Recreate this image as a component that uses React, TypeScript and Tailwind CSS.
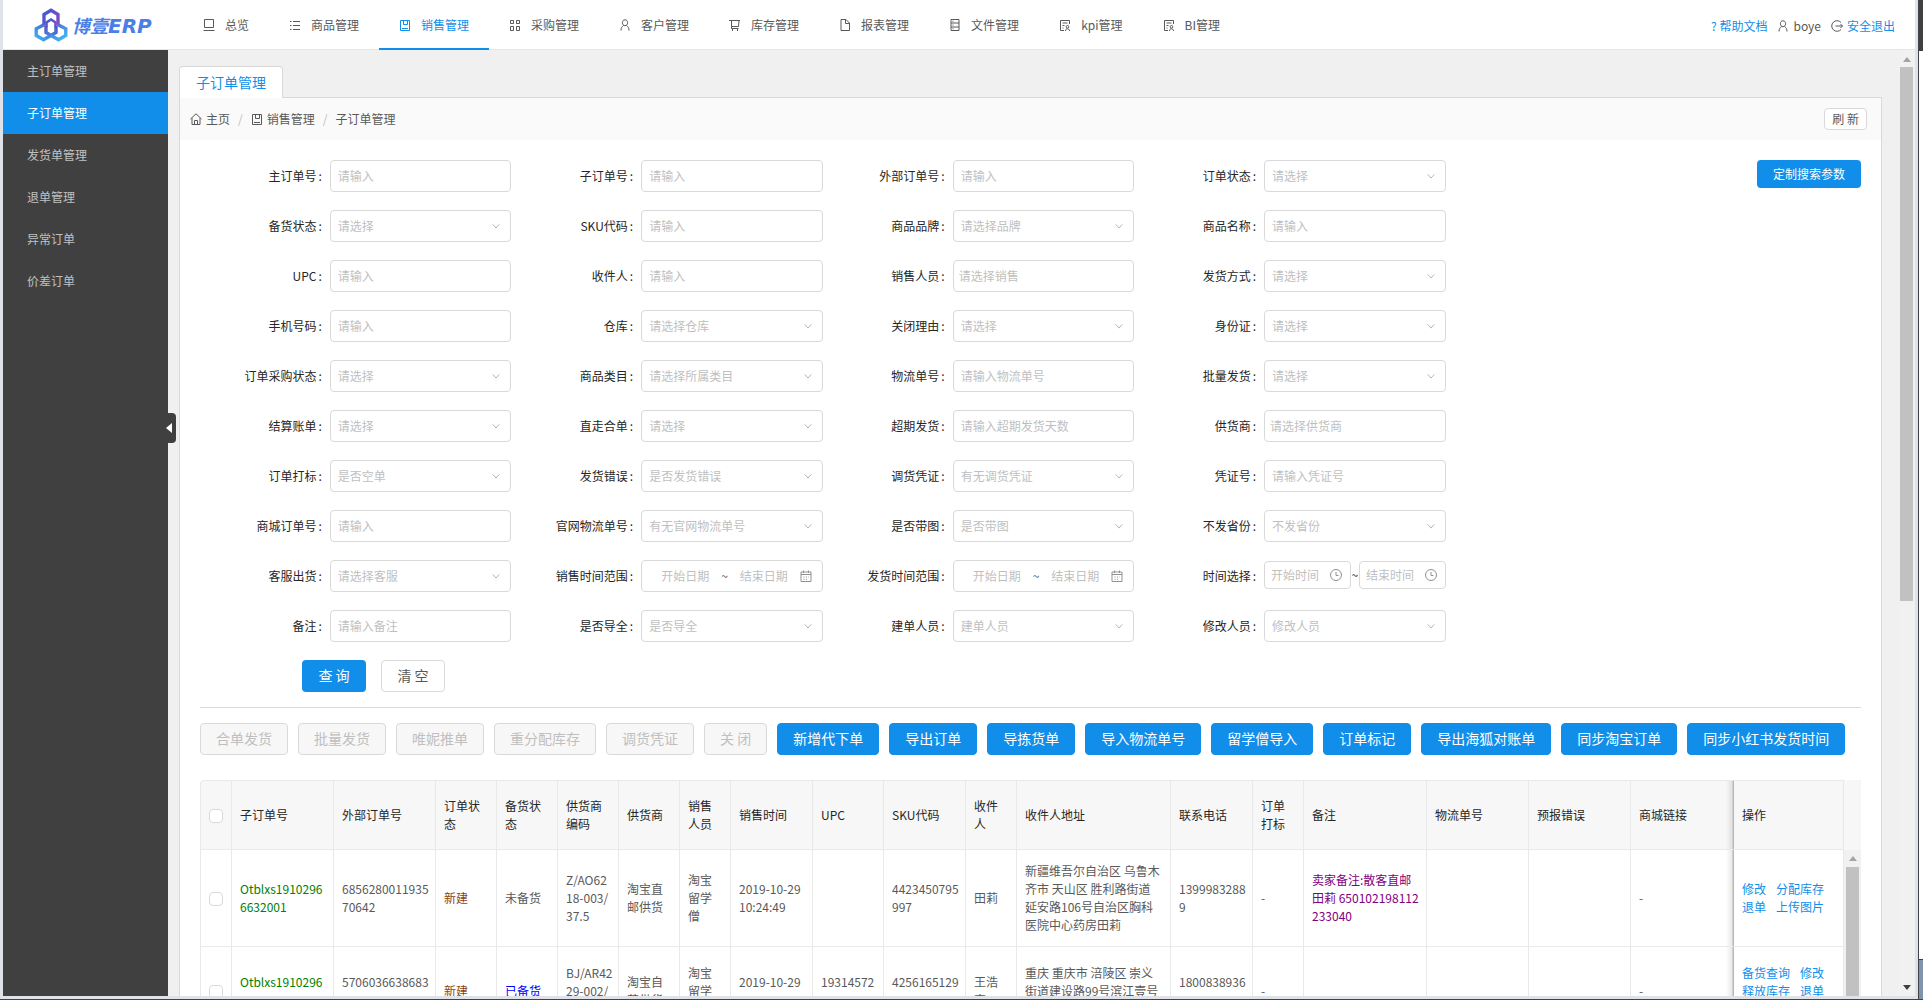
import { useId } from 'react'
import type { ReactNode } from 'react'
import { clsx } from 'clsx'

type IconName =
  | 'laptop'
  | 'list'
  | 'book'
  | 'apps'
  | 'user'
  | 'cart'
  | 'file'
  | 'database'
  | 'solution'
  | 'home'
  | 'logout'
  | 'calendar'
  | 'clock'
  | 'down'

const iconPaths: Record<IconName, ReactNode> = {
  laptop: <path d="M1.5 .5h9v8h-9zM.5 11.5h11" />,
  list: <path d="M1 2.5h1.500M4 2.500h7M1 6.500h1.500M4 6.500h7M1 10.500h1.500M4 10.500h7" />,
  book: <path d="M1.500 1.500h9v10h-9zM4.500 1.500v4h4v-4M3 9.500h6" />,
  apps: <path d="M1.500 1.500h3v3h-3zM7.500 1.500h3v3h-3zM1.500 7.500h3v4h-3zM7.500 7.500h3v4h-3z" />,
  user: (
    <path d="M6 .8c1.700 0 2.600 1.200 2.600 2.900S7.600 6.700 6 6.700 3.400 5.400 3.400 3.700 4.300.8 6 .8zM4.500 6.500C3 7.500 2 9 2 11.500M7.500 6.500C9 7.500 10 9 10 11.500" />
  ),
  cart: <path d="M0 1.500h11M2.500 1.500v6h7l.500-6M2.500 7.500v2h7M3.500 10v2M8.500 10v2" />,
  file: <path d="M2 .5h5l3.500 3.500v7.500H2zM6.500.5v4h4" />,
  database: <path d="M2 .5h8v11H2zM2 4h8M2 8h8M3.500 2.300h1M3.500 6h1M3.500 9.800h1" />,
  solution: (
    <path d="M5 11.500H1.500v-10h9V5M3.500 4h5M3.500 6.500h2M3.500 9h1M8.500 6.500a1.300 1.300 0 1 1 0 2.600 1.300 1.300 0 0 1 0-2.600M6.500 12c0-3 4-3 4 0" />
  ),
  home: <path d="M.5 6 6 .8 11.500 6M2 5v6.500h8V5M4.500 11.500v-4h3v4" />,
  logout: <path d="M10 2.500A5.300 5.300 0 1 0 10 9.500M4.500 6h7M9.500 4l2 2-2 2" />,
  calendar: <path d="M1 2h10v9.500H1zM1 4.500h10M3.500.5V3M8.500.5V3M3.500 7h1M6 7h1M8.500 7h.5M3.500 9.300h1M6 9.300h1" />,
  clock: <path d="M6 .5a5.500 5.500 0 1 1 0 11 5.500 5.500 0 0 1 0-11M6 3v3.500h2.500" />,
  down: <path d="M2 4l4 4.500L10 4" />,
}

function Icon({ name, className }: { name: IconName; className?: string }) {
  return (
    <svg
      viewBox="0 0 12 12"
      fill="none"
      stroke="currentColor"
      className={clsx('shrink-0 overflow-visible', className ?? 'h-3 w-3')}
      aria-hidden="true"
    >
      {iconPaths[name]}
    </svg>
  )
}

const navItems: { label: string; icon: IconName; active?: boolean }[] = [
  { label: '总览', icon: 'laptop' },
  { label: '商品管理', icon: 'list' },
  { label: '销售管理', icon: 'book', active: true },
  { label: '采购管理', icon: 'apps' },
  { label: '客户管理', icon: 'user' },
  { label: '库存管理', icon: 'cart' },
  { label: '报表管理', icon: 'file' },
  { label: '文件管理', icon: 'database' },
  { label: 'kpi管理', icon: 'solution' },
  { label: 'BI管理', icon: 'solution' },
]

const sideItems = ['主订单管理', '子订单管理', '发货单管理', '退单管理', '异常订单', '价差订单']

type FieldKind = 'input' | 'combo' | 'select' | 'dates' | 'times'

const fields: [label: string, placeholder: string, kind: FieldKind][] = [
  ['主订单号', '请输入', 'input'],
  ['子订单号', '请输入', 'input'],
  ['外部订单号', '请输入', 'input'],
  ['订单状态', '请选择', 'select'],
  ['备货状态', '请选择', 'select'],
  ['SKU代码', '请输入', 'input'],
  ['商品品牌', '请选择品牌', 'select'],
  ['商品名称', '请输入', 'input'],
  ['UPC', '请输入', 'input'],
  ['收件人', '请输入', 'input'],
  ['销售人员', '请选择销售', 'combo'],
  ['发货方式', '请选择', 'select'],
  ['手机号码', '请输入', 'input'],
  ['仓库', '请选择仓库', 'select'],
  ['关闭理由', '请选择', 'select'],
  ['身份证', '请选择', 'select'],
  ['订单采购状态', '请选择', 'select'],
  ['商品类目', '请选择所属类目', 'select'],
  ['物流单号', '请输入物流单号', 'input'],
  ['批量发货', '请选择', 'select'],
  ['结算账单', '请选择', 'select'],
  ['直走合单', '请选择', 'select'],
  ['超期发货', '请输入超期发货天数', 'input'],
  ['供货商', '请选择供货商', 'combo'],
  ['订单打标', '是否空单', 'select'],
  ['发货错误', '是否发货错误', 'select'],
  ['调货凭证', '有无调货凭证', 'select'],
  ['凭证号', '请输入凭证号', 'input'],
  ['商城订单号', '请输入', 'input'],
  ['官网物流单号', '有无官网物流单号', 'select'],
  ['是否带图', '是否带图', 'select'],
  ['不发省份', '不发省份', 'select'],
  ['客服出货', '请选择客服', 'select'],
  ['销售时间范围', '', 'dates'],
  ['发货时间范围', '', 'dates'],
  ['时间选择', '', 'times'],
  ['备注', '请输入备注', 'input'],
  ['是否导全', '是否导全', 'select'],
  ['建单人员', '建单人员', 'select'],
  ['修改人员', '修改人员', 'select'],
]

const actions: { label: string; disabled?: boolean }[] = [
  { label: '合单发货', disabled: true },
  { label: '批量发货', disabled: true },
  { label: '唯妮推单', disabled: true },
  { label: '重分配库存', disabled: true },
  { label: '调货凭证', disabled: true },
  { label: '关 闭', disabled: true },
  { label: '新增代下单' },
  { label: '导出订单' },
  { label: '导拣货单' },
  { label: '导入物流单号' },
  { label: '留学僧导入' },
  { label: '订单标记' },
  { label: '导出海狐对账单' },
  { label: '同步淘宝订单' },
  { label: '同步小红书发货时间' },
]

const columns: { title: string; width: string }[] = [
  { title: '子订单号', width: 'w-[102px]' },
  { title: '外部订单号', width: 'w-[102px]' },
  { title: '订单状\n态', width: 'w-[61px]' },
  { title: '备货状\n态', width: 'w-[61px]' },
  { title: '供货商\n编码', width: 'w-[61px]' },
  { title: '供货商', width: 'w-[61px]' },
  { title: '销售\n人员', width: 'w-[51px]' },
  { title: '销售时间', width: 'w-[82px]' },
  { title: 'UPC', width: 'w-[71px]' },
  { title: 'SKU代码', width: 'w-[82px]' },
  { title: '收件\n人', width: 'w-[51px]' },
  { title: '收件人地址', width: 'w-[154px]' },
  { title: '联系电话', width: 'w-[82px]' },
  { title: '订单\n打标', width: 'w-[51px]' },
  { title: '备注', width: 'w-[123px]' },
  { title: '物流单号', width: 'w-[102px]' },
  { title: '预报错误', width: 'w-[102px]' },
  { title: '商城链接', width: 'w-[102px]' },
]

const rows: { height: string; cells: string[]; links: string[][] }[] = [
  {
    height: 'h-[97px]',
    cells: [
      'Otblxs1910296\n6632001',
      '6856280011935\n70642',
      '新建',
      '未备货',
      'Z/AO62\n18-003/\n37.5',
      '淘宝直\n邮供货',
      '淘宝\n留学\n僧',
      '2019-10-29\n10:24:49',
      '',
      '4423450795\n997',
      '田莉',
      '新疆维吾尔自治区 乌鲁木\n齐市 天山区 胜利路街道\n延安路106号自治区胸科\n医院中心药房田莉',
      '1399983288\n9',
      '-',
      '卖家备注:散客直邮\n田莉 650102198112\n233040',
      '',
      '',
      '-',
    ],
    links: [
      ['修改', '分配库存'],
      ['退单', '上传图片'],
    ],
  },
  {
    height: 'h-[89px]',
    cells: [
      'Otblxs1910296\n6632002',
      '5706036638683\n70642',
      '新建',
      '已备货',
      'BJ/AR42\n29-002/\n38',
      '淘宝自\n营供货',
      '淘宝\n留学\n僧',
      '2019-10-29\n10:21:30',
      '19314572\n3801',
      '4256165129\n998',
      '王浩\n宇',
      '重庆 重庆市 涪陵区 崇义\n街道建设路99号滨江壹号\n小区',
      '1800838936\n8',
      '-',
      '',
      '',
      '',
      '-',
    ],
    links: [['备货查询', '修改'], ['释放库存', '退单'], ['上传图片']],
  },
]

const boxClass =
  'w-full rounded border border-[#d9d9d9] bg-white outline-none placeholder:text-[#bfbfbf] placeholder:opacity-100'

function cellColor(index: number, value: string) {
  if (index === 0) return 'text-[#008000]'
  if (index === 2) return 'text-[#8b4513]'
  if (index === 14) return 'text-[#800080]'
  if (value === '已备货') return 'text-[#0000ff]'
  return 'text-[#595959]'
}

export default function App() {
  return (
    <div className="flex h-screen flex-col overflow-hidden bg-[#dfe3e9] font-['Noto_Sans_CJK_SC',sans-serif] text-xs leading-[18px] text-[#595959]">
      <div className="flex min-h-0 flex-1">
        <div className="flex min-w-0 flex-1 flex-col pb-[3px] pl-[3px]">
          <Header />
          <div className="flex min-h-0 flex-1 bg-[#f0f0f0]">
            <Sidebar />
            <main className="flex min-w-0 flex-1 flex-col overflow-hidden pt-4 pr-4 pl-[11px]">
              <OrderPage />
            </main>
            <PageScrollbar />
          </div>
        </div>
        <WindowEdge />
      </div>
      <div className="h-px shrink-0 bg-[#404347]" />
    </div>
  )
}

function Logo() {
  return (
    <a href="#home" className="flex h-full w-[181px] shrink-0 items-center pl-[31px]">
      <svg viewBox="0 0 34 34" className="h-[34px] w-[34px] shrink-0" fill="none" strokeWidth="3.400" aria-hidden="true">
        <defs>
          <linearGradient id="top" x1="0" y1="0" x2="1" y2="1">
            <stop offset="0" stopColor="#3f5bd8" />
            <stop offset="1" stopColor="#8a48bd" />
          </linearGradient>
          <linearGradient id="left" x1="0" y1="1" x2="1" y2="0">
            <stop offset="0" stopColor="#3cb4f5" />
            <stop offset="1" stopColor="#4a52c8" />
          </linearGradient>
          <linearGradient id="right" x1="0" y1="0" x2="1" y2="1">
            <stop offset="0" stopColor="#5a50c4" />
            <stop offset="1" stopColor="#3fc0f6" />
          </linearGradient>
        </defs>
        <path d="M10 17V6.500L17 2.300l7 4.200V17" stroke="url(#top)" />
        <path d="M12.500 19v-4.500L17 11.500l4.500 3V19" stroke="url(#top)" strokeWidth="2.600" />
        <path d="M10.500 16.500 2.200 20.800v6.700l7.300 4.300L22 24.500V18" stroke="url(#left)" />
        <path d="m23.500 16.500 8.300 4.300v6.700l-7.300 4.300L12 24.500V18" stroke="url(#right)" />
      </svg>
      <span className="ml-1 flex items-baseline pt-0.5 font-bold text-[#4a80e6] italic">
        <span className="text-lg leading-6">博壹</span>
        <span className="font-['DejaVu_Sans',sans-serif] text-xl leading-6">ERP</span>
      </span>
    </a>
  )
}

function Header() {
  return (
    <header className="flex h-[50px] shrink-0 border-b border-[#e6e6e6] bg-white">
      <Logo />
      <nav className="-ml-px flex">
        {navItems.map(({ label, icon, active }) => (
          <a
            key={label}
            href={`#${label}`}
            className={clsx(
              'flex h-[50px] items-center gap-2.5 border-y-2 border-t-transparent px-5 whitespace-nowrap',
              active ? 'border-b-[#108ee9] text-[#108ee9]' : 'border-b-transparent',
            )}
          >
            <Icon name={icon} />
            {label}
          </a>
        ))}
      </nav>
      <div className="ml-auto flex items-center gap-2.5 pt-0.5 pr-5 whitespace-nowrap">
        <a href="#help" className="text-[#108ee9]">
          ? 帮助文档
        </a>
        <span className="flex items-center gap-1">
          <Icon name="user" />
          boye
        </span>
        <a href="#logout" className="flex items-center gap-1 text-[#108ee9]">
          <Icon name="logout" className="h-3 w-3 text-[#595959]" />
          安全退出
        </a>
      </div>
    </header>
  )
}

function Sidebar() {
  return (
    <aside className="relative w-[165px] shrink-0 bg-[#404040]">
      <nav className="flex flex-col">
        {sideItems.map(item => (
          <a
            key={item}
            href={`#${item}`}
            className={clsx(
              'flex h-[42px] items-center pl-6',
              item === '子订单管理' ? 'bg-[#108ee9] text-white' : 'text-[#c0c0c0]',
            )}
          >
            {item}
          </a>
        ))}
      </nav>
      <button
        type="button"
        aria-label="收起菜单"
        className="absolute top-[363px] -right-2 flex h-[30px] w-2.5 items-center rounded-r-sm bg-[#404040]"
      >
        <svg viewBox="0 0 6 10" className="h-2.5 w-1.5" fill="#fff" aria-hidden="true">
          <path d="M6 0v10L0 5z" />
        </svg>
      </button>
    </aside>
  )
}

function OrderPage() {
  return (
    <>
      <div className="flex shrink-0">
        <button
          type="button"
          className="h-8 rounded-t border border-b-0 border-[#d9d9d9] bg-white px-4 pb-0.5 text-sm whitespace-nowrap text-[#108ee9]"
        >
          子订单管理
        </button>
        <div className="flex-1 border-b border-[#d9d9d9]" />
      </div>

      <div className="min-h-0 flex-1 overflow-hidden border-x border-[#d9d9d9] bg-white">
        <div className="flex h-[42px] items-center justify-between bg-[#fafafa] pr-3.5 pl-2.5">
          <nav className="flex items-center gap-2">
            <a href="#home" className="flex items-center gap-1">
              <Icon name="home" />
              主页
            </a>
            <span className="text-[#bfbfbf]">/</span>
            <a href="#sales" className="flex items-center gap-1">
              <Icon name="book" />
              销售管理
            </a>
            <span className="text-[#bfbfbf]">/</span>
            <span>子订单管理</span>
          </nav>
          <button type="button" className="h-[22px] rounded border border-[#d9d9d9] bg-white px-[7px] leading-5">
            刷 新
          </button>
        </div>

        <div className="px-5 pt-5">
          <SearchForm />
          <div className="mt-[15px] flex gap-2.5 overflow-hidden border-t border-[#d9d9d9] pt-[15px]">
            {actions.map(({ label, disabled }) => (
              <button
                key={label}
                type="button"
                disabled={disabled}
                className={clsx(
                  'h-8 shrink-0 rounded border px-[15px] pb-0.5 text-sm whitespace-nowrap',
                  disabled
                    ? 'border-[#d9d9d9] bg-[#f7f7f7] text-[#bfbfbf]'
                    : 'border-[#108ee9] bg-[#108ee9] text-white',
                )}
              >
                {label}
              </button>
            ))}
          </div>
          <OrderTable />
        </div>
      </div>
    </>
  )
}

function SearchForm() {
  return (
    <form onSubmit={e => e.preventDefault()}>
      <div className="flex">
        <div className="grid w-3/4 grid-cols-4 gap-y-[18px]">
          {fields.map(([label, placeholder, kind]) => (
            <Field key={label} label={label} placeholder={placeholder} kind={kind} />
          ))}
        </div>
        <div className="flex w-1/4 items-start justify-end">
          <button type="button" className="h-7 rounded bg-[#108ee9] px-4 text-white">
            定制搜索参数
          </button>
        </div>
      </div>
      <div className="mt-[18px] flex gap-[15px] pl-[102px]">
        <button type="submit" className="h-8 w-16 rounded bg-[#108ee9] pb-0.5 text-sm text-white">
          查 询
        </button>
        <button type="reset" className="h-8 w-16 rounded border border-[#d9d9d9] bg-white pb-0.5 text-sm">
          清 空
        </button>
      </div>
    </form>
  )
}

function Field({ label, placeholder, kind }: { label: string; placeholder: string; kind: FieldKind }) {
  const id = useId()

  return (
    <div className="flex h-8 items-center">
      <label htmlFor={id} className="w-5/12 pr-2 text-right whitespace-nowrap text-[#262626]">
        {label}
        <span className="ml-0.5">:</span>
      </label>
      <div className="w-7/12">
        {kind === 'input' && (
          <input id={id} placeholder={placeholder} className={clsx(boxClass, 'block h-8 px-[7px] pb-px')} />
        )}
        {kind === 'combo' && (
          <input
            id={id}
            role="combobox"
            aria-expanded="false"
            placeholder={placeholder}
            className={clsx(boxClass, 'block h-8 px-[5px] pb-px')}
          />
        )}
        {kind === 'select' && (
          <div className="relative">
            <select id={id} className={clsx(boxClass, 'block h-8 appearance-none px-[7px] text-[#bfbfbf]')}>
              <option>{placeholder}</option>
            </select>
            <Icon
              name="down"
              className="pointer-events-none absolute top-[11px] right-2.5 h-2.5 w-2.5 text-[#a8a8a8]"
            />
          </div>
        )}
        {kind === 'dates' && (
          <div className={clsx(boxClass, 'flex h-8 items-center pr-2.5 pl-[7px]')}>
            <input
              id={id}
              placeholder="开始日期"
              className="w-0 flex-1 text-center outline-none placeholder:text-[#bfbfbf]"
            />
            <span>~</span>
            <input
              aria-label={`${label}结束日期`}
              placeholder="结束日期"
              className="w-0 flex-1 text-center outline-none placeholder:text-[#bfbfbf]"
            />
            <Icon name="calendar" className="h-3 w-3 text-[#919191]" />
          </div>
        )}
        {kind === 'times' && (
          <div className="flex items-center justify-between pb-0.5 text-[#262626]">
            <TimeBox id={id} placeholder="开始时间" />
            <span className="w-2 text-center">~</span>
            <TimeBox placeholder="结束时间" />
          </div>
        )}
      </div>
    </div>
  )
}

function TimeBox({ id, placeholder }: { id?: string; placeholder: string }) {
  return (
    <div className="flex h-7 min-w-0 flex-1 items-center rounded border border-[#d9d9d9] pr-2 pl-1.5">
      <input
        id={id}
        aria-label={placeholder}
        placeholder={placeholder}
        className="w-0 flex-1 outline-none placeholder:text-[#bfbfbf]"
      />
      <Icon name="clock" className="h-3 w-3 text-[#919191]" />
    </div>
  )
}

const cellClass = 'border-r border-b border-[#e9e9e9]'
const fixedClass =
  'relative border-r border-b border-l border-[#e9e9e9] border-l-[#cfcfcf] px-2 before:absolute before:inset-y-0 before:-left-2 before:w-2 before:bg-linear-to-l before:from-black/12 before:to-transparent'

function OrderTable() {
  return (
    <div className="mt-[25px] flex">
      <table className="w-0 flex-1 table-fixed border-separate border-spacing-0 text-left">
        <colgroup>
          <col className="w-8" />
          {columns.map(({ title, width }) => (
            <col key={title} className={width} />
          ))}
          <col className="w-[111px]" />
        </colgroup>
        <thead className="bg-[#f7f7f7] text-[#262626]">
          <tr className="h-[70px]">
            <th className={clsx(cellClass, 'rounded-tl border-t border-l pl-2')}>
              <Check label="全选" />
            </th>
            {columns.map(({ title }) => (
              <th key={title} className={clsx(cellClass, 'border-t pl-2 font-normal whitespace-pre')}>
                {title}
              </th>
            ))}
            <th className={clsx(fixedClass, 'border-t font-normal')}>操作</th>
          </tr>
        </thead>
        <tbody>
          {rows.map(({ height, cells, links }) => (
            <tr key={cells[0]} className={height}>
              <td className={clsx(cellClass, 'border-l pl-2')}>
                <Check label={`选择 ${cells[1]}`} />
              </td>
              {cells.map((cell, i) => (
                <td key={columns[i].title} className={clsx(cellClass, cellColor(i, cell), 'pl-2 whitespace-pre')}>
                  {cell}
                </td>
              ))}
              <td className={fixedClass}>
                {links.map(line => (
                  <div key={line[0]} className="flex gap-2.5 whitespace-nowrap text-[#108ee9]">
                    {line.map(link => (
                      <a key={link} href={`#${link}`}>
                        {link}
                      </a>
                    ))}
                  </div>
                ))}
              </td>
            </tr>
          ))}
        </tbody>
      </table>
      <div className="flex w-[17px] shrink-0 flex-col bg-[#f1f1f1]">
        <div className="h-[70px] shrink-0 rounded-tr bg-[#f7f7f7]" />
        <Arrow className="mx-auto my-1.5 h-[5px] w-2 text-[#a3a3a3]" />
        <div className="mx-0.5 flex-1 bg-[#c1c1c1]" />
      </div>
    </div>
  )
}

function Check({ label }: { label: string }) {
  return (
    <input
      type="checkbox"
      aria-label={label}
      className="mt-0.5 block h-3.5 w-3.5 appearance-none rounded-sm border border-[#d9d9d9] bg-white checked:bg-[#108ee9]"
    />
  )
}

function Arrow({ className }: { className: string }) {
  return (
    <svg viewBox="0 0 8 5" className={clsx('shrink-0', className)} fill="currentColor" aria-hidden="true">
      <path d="M4 0l4 5H0z" />
    </svg>
  )
}

function PageScrollbar() {
  return (
    <div className="flex w-[17px] shrink-0 flex-col items-center bg-[#f1f1f1]">
      <Arrow className="mt-[7px] mb-[5px] h-[5px] w-2 text-[#a3a3a3]" />
      <div className="h-[56.5%] w-[13px] bg-[#c1c1c1]" />
      <Arrow className="mt-auto mb-1.5 h-[5px] w-2 rotate-180 text-[#404040]" />
    </div>
  )
}

function WindowEdge() {
  return (
    <div className="flex w-2 shrink-0">
      <div className="w-[3px] bg-[#dfe3e9]" />
      <div className="w-px bg-[#404347]" />
      <div className="flex flex-1 flex-col bg-white">
        <div className="h-[51px] bg-[#404040]" />
        <div className="mt-auto h-10 border-t border-[#404347] bg-[#8093ad]" />
      </div>
    </div>
  )
}
